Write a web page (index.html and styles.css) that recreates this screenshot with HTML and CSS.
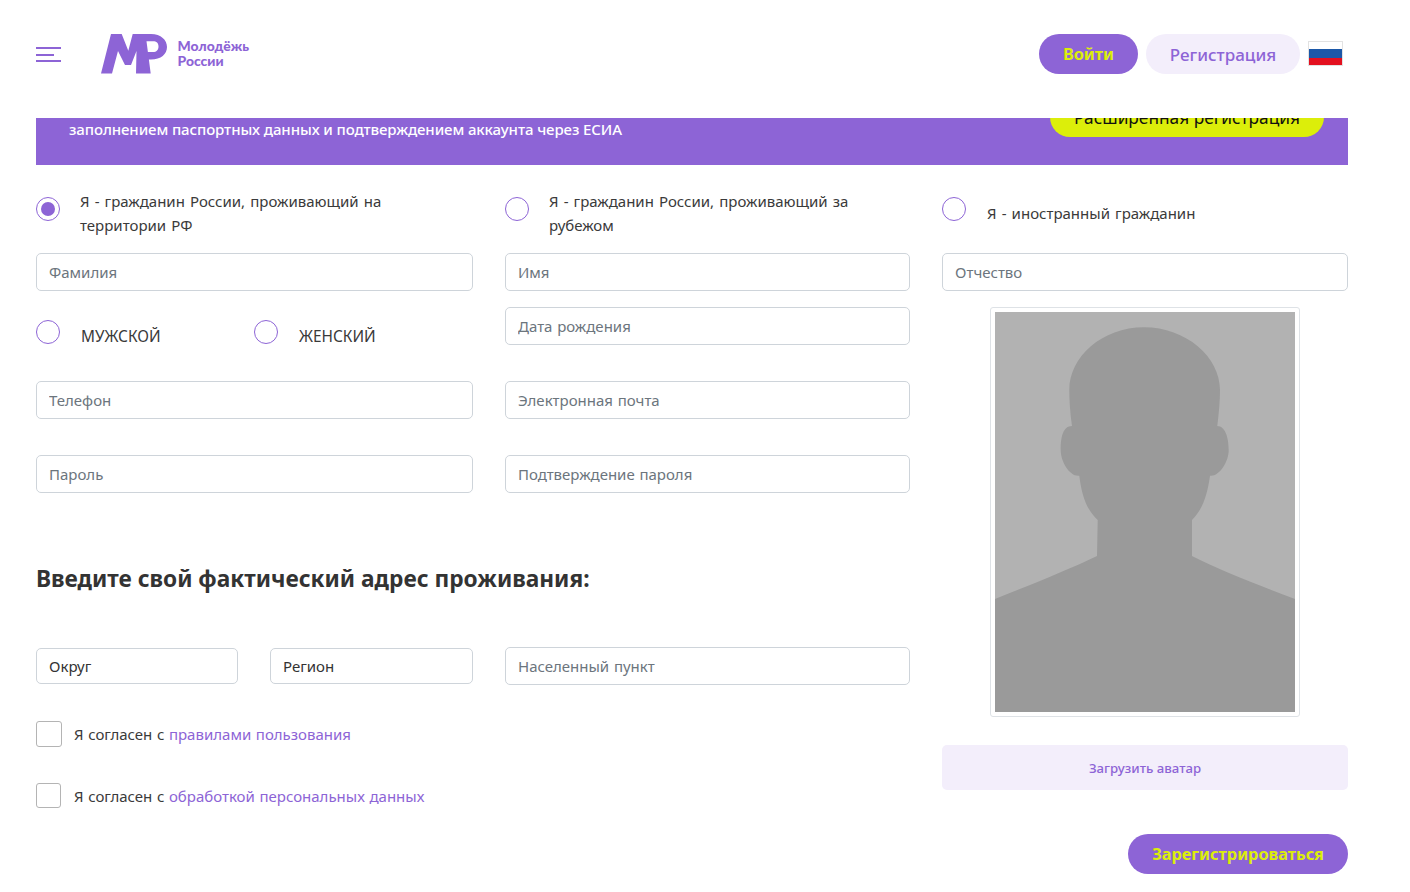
FILE: index.html

```html
<!DOCTYPE html>
<html lang="ru">
<head>
    <meta charset="UTF-8">
    <meta name="viewport" content="width=device-width, initial-scale=1.0">
    <title>Регистрация - Молодёжь России</title>
    <link rel="stylesheet" href="styles.css">
</head>
<body>
    <header class="header">
        <div class="burger"><span></span><span class="short"></span><span></span></div>
        <svg class="logo-mark" viewBox="0 0 66 40" width="66" height="40">
            <path d="M0 39.5 L10 0 H20.7 L27.3 16.7 L31.7 0 H50 C60 0 66 6 66 13 C66 20 60 25.5 50 25.5 H47.5 L46.5 18 H52 C55.5 18 57.5 16 57.5 12.5 C57.5 9 55.5 7.3 52 7.3 H45.5 L49.7 39.5 H35 L35.5 17 L30 31 H24 L17 17 L11 39.5 Z" fill="#8d64d6"/>
        </svg>
        <div class="logo-text">Молодёжь<br>России</div>
        <div class="header-right">
            <a class="btn btn-main">Войти</a>
            <a class="btn btn-light">Регистрация</a>
            <div class="flag"><span class="white"></span><span class="blue"></span><span class="red"></span></div>
        </div>
    </header>

    <main class="page">
        <div class="banner">
            <p>Расширенная регистрация с заполнением<br>заполнением паспортных данных и подтверждением аккаунта через ЕСИА</p>
            <a class="banner-btn">Расширенная регистрация</a>
        </div>

        <div class="form">
            <div class="form-left">
                <div class="row-2">
                    <label class="radio-line"><span class="radio checked"></span><span class="radio-text">Я - гражданин России, проживающий на территории РФ</span></label>
                    <label class="radio-line"><span class="radio"></span><span class="radio-text">Я - гражданин России, проживающий за рубежом</span></label>
                </div>
                <div class="row-2 row-name">
                    <input class="field" type="text" placeholder="Фамилия">
                    <input class="field" type="text" placeholder="Имя">
                </div>
                <div class="row-2 row-birth">
                    <div class="gender">
                        <label class="gender-item"><span class="radio"></span><span>МУЖСКОЙ</span></label>
                        <label class="gender-item"><span class="radio"></span><span>ЖЕНСКИЙ</span></label>
                    </div>
                    <input class="field" type="text" placeholder="Дата рождения">
                </div>
                <div class="row-2 row-contact">
                    <input class="field" type="text" placeholder="Телефон">
                    <input class="field" type="text" placeholder="Электронная почта">
                </div>
                <div class="row-2 row-pass">
                    <input class="field" type="text" placeholder="Пароль">
                    <input class="field" type="text" placeholder="Подтверждение пароля">
                </div>

                <h2 class="title">Введите свой фактический адрес проживания:</h2>

                <div class="row-2 row-address">
                    <div class="selects">
                        <div class="select">Округ</div>
                        <div class="select">Регион</div>
                    </div>
                    <input class="field" type="text" placeholder="Населенный пункт">
                </div>

                <div class="agree agree-first"><span class="check"></span><span>Я согласен с <a>правилами пользования</a></span></div>
                <div class="agree agree-second"><span class="check small"></span><span>Я согласен с <a>обработкой персональных данных</a></span></div>
            </div>

            <div class="form-right">
                <label class="radio-line foreign"><span class="radio"></span><span class="radio-text">Я - иностранный гражданин</span></label>
                <input class="field" type="text" placeholder="Отчество">
                <div class="avatar">
                    <svg viewBox="0 0 300 400" width="300" height="400">
                        <rect width="300" height="400" fill="#b2b2b2"/>
                        <path d="M0 287 C40 271 75 257 102 244 L102.7 208 C92 198 87 185 84.3 163.7 C75 165 65.7 150 65.7 138 C65.7 125 68 114 77 114 C75 100 74.3 88 74.3 78 C74.3 45 107 15.3 149 15.3 C191 15.3 225 45 225 78 C225 88 224 100 222.3 114 C230 114 233.7 125 233.7 138 C233.7 150 224 165 215 163.7 C212 185 207 198 197 208 L197 244 C225 258 260 272 300 287 V400 H0 Z" fill="#9a9a9a"/>
                    </svg>
                </div>
                <a class="upload">Загрузить аватар</a>
                <div class="submit-line"><a class="btn btn-main btn-submit">Зарегистрироваться</a></div>
            </div>
        </div>
    </main>
</body>
</html>
```

FILE: styles.css

```css
* { box-sizing: border-box; }
html, body { height: 892px; overflow: hidden; }
body { margin: 0; background: #fff; color: #333; font-family: "Noto Sans", "Open Sans", sans-serif; font-size: 15px; }
a { text-decoration: none; }

/* Header stays on top of the page while it scrolls */
.header { position: fixed; top: 0; left: 0; right: 0; height: 118px; background: #fff; z-index: 10; display: flex; align-items: flex-start; padding: 34px 67px 0 36px; }
.burger { width: 25px; margin-top: 13px; display: flex; flex-direction: column; gap: 4.5px; }
.burger span { display: block; height: 2px; background: #8d64d6; }
.burger .short { width: 18px; }
.logo-mark { margin-left: 40px; }
.logo-text { margin: 4px 0 0 10.5px; color: #8d64d6; font-family: Lato, sans-serif; font-weight: 900; font-size: 13.9px; line-height: 15px; }
.header-right { margin-left: auto; display: flex; align-items: flex-start; gap: 8px; }
.btn { display: flex; align-items: center; justify-content: center; height: 40px; border-radius: 20px; font-size: 17px; }
.btn-main { width: 99px; background: #8d64d6; color: #dcee0a; font-size: 16.3px; font-weight: 700; }
.btn-light { width: 154px; background: #f3eefb; color: #8d64d6; font-weight: 500; }
.flag { width: 35px; height: 25px; margin-top: 7px; display: flex; flex-direction: column; border: 1px solid #e2e2e2; }
.flag .white { height: 7px; background: #fff; }
.flag .blue { height: 9px; background: #1c58a8; }
.flag .red { height: 7px; background: #e3101f; }

.page { padding: 0 62px 0 36px; }
.banner { height: 165px; background: #8d64d6; padding: 93px 24px 0 33px; display: flex; justify-content: space-between; align-items: flex-start; overflow: hidden; }
.banner p { margin: 0; color: #fff; font-size: 15px; font-weight: 500; line-height: 24px; letter-spacing: -0.1px; white-space: nowrap; }
.banner-btn { width: 274px; height: 44px; background: #dcee0a; color: #111; border-radius: 20px; display: flex; align-items: flex-end; justify-content: center; padding-bottom: 8px; font-size: 17.3px; }

.form { display: grid; grid-template-columns: 874px 406px; gap: 32px; padding-top: 24px; }
.row-2 { display: grid; grid-template-columns: 437px 405px; gap: 32px; }
.row-name { margin-top: 16px; }
.row-birth { margin-top: 16px; height: 58px; }
.row-contact { margin-top: 16px; }
.row-pass { margin-top: 36px; }
.row-address { margin-top: 52px; }

.field { display: block; width: 100%; height: 38px; padding: 0 12px; border: 1px solid #ced4da; border-radius: 5px; background: #fff; color: #333; font-family: inherit; font-size: 15px; word-spacing: 0.8px; outline: none; }
.field::placeholder { color: #6c757d; opacity: 1; }

.radio-line { display: flex; gap: 20px; align-items: flex-start; line-height: 24px; height: 48px; }
.radio-line .radio { margin-top: 8px; }
.radio-text { max-width: 320px; word-spacing: 1.2px; color: #3a3a3a; }
.radio { flex: none; width: 24px; height: 24px; border: 1px solid #8d64d6; border-radius: 50%; background: #fff; position: relative; }
.radio.checked::after { content: ""; position: absolute; left: 4px; top: 4px; width: 14px; height: 14px; border-radius: 50%; background: #8d64d6; }

.gender { display: flex; padding-top: 13px; }
.gender-item { width: 218px; display: flex; gap: 21px; font-size: 15.4px; line-height: 24px; color: #3a3a3a; }
.gender-item span:last-child { padding-top: 5px; }

.title { margin: 70px 0 0; font-size: 22.7px; line-height: 32px; font-weight: 700; color: #333; }

.selects { display: grid; grid-template-columns: 202px 203px; gap: 32px; padding-top: 1px; }
.select { height: 36px; padding: 0 12px; border: 1px solid #ced4da; border-radius: 5px; display: flex; align-items: center; font-size: 15px; }

.agree { display: flex; align-items: center; gap: 12px; line-height: 24px; word-spacing: 0.7px; color: #3a3a3a; }
.agree a { color: #8d64d6; }
.agree-first { margin-top: 36px; }
.agree-second { margin-top: 36px; }
.check { width: 26px; height: 26px; border: 1px solid #b4b4b4; border-radius: 3px; background: #fff; }
.check.small { width: 25px; height: 25px; margin-right: 1px; }

.foreign { gap: 21px; }
.foreign .radio { margin-top: 8px; }
.foreign .radio-text { padding-top: 12px; }
.form-right .field { margin-top: 16px; }
.avatar { width: 310px; height: 410px; margin: 16px 0 0 48px; padding: 4px; border: 1px solid #dee2e6; border-radius: 3px; }
.avatar svg { display: block; }
.upload { display: flex; align-items: center; justify-content: center; height: 45px; margin-top: 28px; background: #f3eefb; border-radius: 5px; color: #8d64d6; font-size: 13.2px; font-weight: 500; }
.submit-line { display: flex; justify-content: flex-end; margin-top: 44px; }
.btn-submit { width: 220px; }
```
